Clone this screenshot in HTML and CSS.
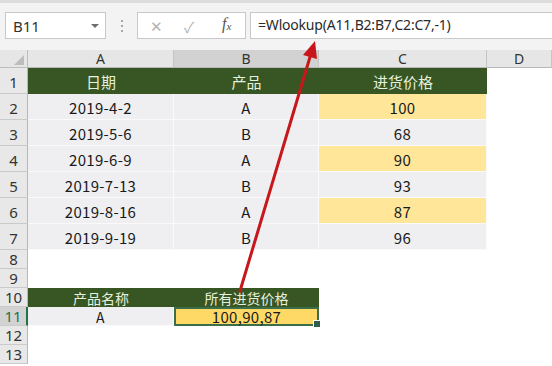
FILE: index.html
```html
<!DOCTYPE html>
<html>
<head>
<meta charset="utf-8">
<link rel="stylesheet" href="styles.css">
</head>
<body>
<div class="app">
  <div class="toolbar">
    <div class="namebox"><span>B11</span><span class="drop"></span></div>
    <div class="grip"><i></i><i></i><i></i></div>
    <div class="fbtns">
      <span class="btn x">✕</span>
      <span class="btn ok">✓</span>
      <span class="btn fx">f<sub>x</sub></span>
    </div>
    <div class="finput">=Wlookup(A11,B2:B7,C2:C7,-1)</div>
  </div>
  <div class="sheet">
    <div class="corner"><span class="tri"></span></div>
    <div class="ch">A</div>
    <div class="ch sel">B</div>
    <div class="ch">C</div>
    <div class="ch">D</div>

    <div class="rh tall">1</div>
    <div class="c hd">日期</div><div class="c hd">产品</div><div class="c hd">进货价格</div><div class="c"></div>

    <div class="rh tall">2</div>
    <div class="c g num">2019-4-2</div><div class="c g num">A</div><div class="c y num">100</div><div class="c"></div>
    <div class="rh tall">3</div>
    <div class="c g num">2019-5-6</div><div class="c g num">B</div><div class="c g num">68</div><div class="c"></div>
    <div class="rh tall">4</div>
    <div class="c g num">2019-6-9</div><div class="c g num">A</div><div class="c y num">90</div><div class="c"></div>
    <div class="rh tall">5</div>
    <div class="c g num">2019-7-13</div><div class="c g num">B</div><div class="c g num">93</div><div class="c"></div>
    <div class="rh tall">6</div>
    <div class="c g num">2019-8-16</div><div class="c g num">A</div><div class="c y num">87</div><div class="c"></div>
    <div class="rh tall">7</div>
    <div class="c g num">2019-9-19</div><div class="c g num">B</div><div class="c g num">96</div><div class="c"></div>

    <div class="rh">8</div><div class="c"></div><div class="c"></div><div class="c"></div><div class="c"></div>
    <div class="rh">9</div><div class="c"></div><div class="c"></div><div class="c"></div><div class="c"></div>
    <div class="rh">10</div>
    <div class="c hd short">产品名称</div><div class="c hd short">所有进货价格</div><div class="c"></div><div class="c"></div>
    <div class="rh selr">11</div>
    <div class="c g num short">A</div><div class="c active num short">100,90,87<span class="handle"></span></div><div class="c"></div><div class="c"></div>
    <div class="rh">12</div><div class="c"></div><div class="c"></div><div class="c"></div><div class="c"></div>
    <div class="rh">13</div><div class="c"></div><div class="c"></div><div class="c"></div><div class="c"></div>
  </div>
  <svg class="arrow" width="552" height="366" viewBox="0 0 552 366">
    <line x1="240" y1="291" x2="310" y2="57" stroke="#c8171b" stroke-width="3" stroke-linecap="round"/>
    <polygon points="315,41 303,55 317,59" fill="#c8171b"/>
  </svg>
</div>
</body>
</html>
```

FILE: styles.css
```css
html, body {
  margin: 0;
  padding: 0;
  background: #ffffff;
}
.app {
  position: relative;
  width: 552px;
  height: 366px;
  overflow: hidden;
  font-family: "Noto Sans", "Noto Sans CJK SC", sans-serif;
}
.toolbar {
  border-top: 3px solid #dcdcdc;
  background: #f3f3f3;
  display: flex;
  align-items: flex-start;
  padding-top: 9px;
  box-sizing: border-box;
  height: 50px;
}
.namebox {
  margin-left: 5px;
  width: 101px;
  height: 27px;
  box-sizing: border-box;
  border: 1px solid #c8c8c8;
  background: #fff;
  display: flex;
  align-items: center;
  justify-content: space-between;
  padding: 0 6px 0 7px;
  font-size: 15px;
  color: #333;
}
.drop {
  width: 0;
  height: 0;
  border-left: 4px solid transparent;
  border-right: 4px solid transparent;
  border-top: 4px solid #6e6e6e;
}
.grip {
  width: 31px;
  height: 27px;
  display: flex;
  flex-direction: column;
  align-items: center;
  justify-content: center;
  gap: 3px;
}
.grip i {
  width: 2px;
  height: 2px;
  background: #a8a8a8;
}
.fbtns {
  width: 109px;
  height: 27px;
  box-sizing: border-box;
  border: 1px solid #c8c8c8;
  background: #fff;
  position: relative;
}
.btn {
  position: absolute;
  top: 3px;
  font-size: 15px;
  color: #b4b4b4;
}
.btn.x { left: 12px; }
.btn.ok { left: 46px; }
.btn.fx {
  left: 84px;
  top: 2px;
  color: #555;
  font-family: "Liberation Serif", serif;
  font-style: italic;
  font-size: 16px;
}
.btn.fx sub {
  font-size: 11px;
  vertical-align: -1px;
}
.finput {
  margin-left: 4px;
  flex: 1;
  height: 27px;
  box-sizing: border-box;
  border: 1px solid #c8c8c8;
  border-right: none;
  background: #fff;
  padding-left: 7px;
  font-size: 14px;
  line-height: 24px;
  color: #2a2a2a;
  font-family: "Noto Sans", sans-serif;
  letter-spacing: -0.2px;
}
.sheet {
  display: grid;
  grid-template-columns: 28px 146px 145px 168px 65px;
  grid-template-rows: 18px repeat(7, 26px) repeat(6, 19px);
  background: #fff;
}
.corner {
  background: #e6e6e6;
  border-right: 1px solid #bdbdbd;
  border-bottom: 1px solid #bdbdbd;
  position: relative;
  box-sizing: border-box;
}
.tri {
  position: absolute;
  right: 3px;
  bottom: 2px;
  width: 0;
  height: 0;
  border-left: 10px solid transparent;
  border-bottom: 10px solid #bcbcbc;
}
.ch {
  background: #e6e6e6;
  border-right: 1px solid #c4c4c4;
  border-bottom: 1px solid #b8b8b8;
  box-sizing: border-box;
  font-size: 14px;
  color: #333;
  display: flex;
  align-items: center;
  justify-content: center;
  font-family: "Noto Sans", sans-serif;
}
.ch.sel {
  background: #d2d2d2;
}
.rh {
  background: #e8e8e8;
  border-right: 1px solid #b8b8b8;
  border-bottom: 1px solid #cacaca;
  box-sizing: border-box;
  font-size: 15px;
  color: #333;
  display: flex;
  align-items: flex-end;
  justify-content: center;
  line-height: 18px;
  font-family: "Noto Sans", sans-serif;
}
.rh.tall {
  padding-bottom: 2px;
}
.rh.selr {
  background: #d2d2d2;
  color: #217346;
  border-right: 2px solid #217346;
}
.c {
  box-sizing: border-box;
  display: flex;
  align-items: center;
  justify-content: center;
  font-size: 15px;
  line-height: 20px;
  color: #1a1a1a;
  font-family: "Noto Sans CJK SC", sans-serif;
  padding-top: 2px;
  position: relative;
}
.c.short {
  font-size: 14px;
  line-height: 16px;
  padding-top: 1px;
  overflow: hidden;
}
.c.active.short {
  overflow: visible;
  font-size: 15px;
  line-height: 15px;
}
.c.hd {
  background: #375623;
  color: #e6f0de;
}
.c.g {
  background: #efeff1;
  border-bottom: 1px solid #fafafa;
  border-right: 1px solid #fafafa;
}
.c.y {
  background: #ffe699;
  border-bottom: 1px solid #fafafa;
  border-right: 1px solid #fafafa;
}
.num {
  letter-spacing: 0.3px;
}
.c.active {
  background: #ffd966;
  border: 2px solid #3b6e4a;
  padding-top: 0;
}
.handle {
  position: absolute;
  right: -4px;
  bottom: -4px;
  width: 6px;
  height: 6px;
  background: #2f5e4c;
  border: 1px solid #fff;
}
.arrow {
  position: absolute;
  left: 0;
  top: 0;
  pointer-events: none;
}
```
